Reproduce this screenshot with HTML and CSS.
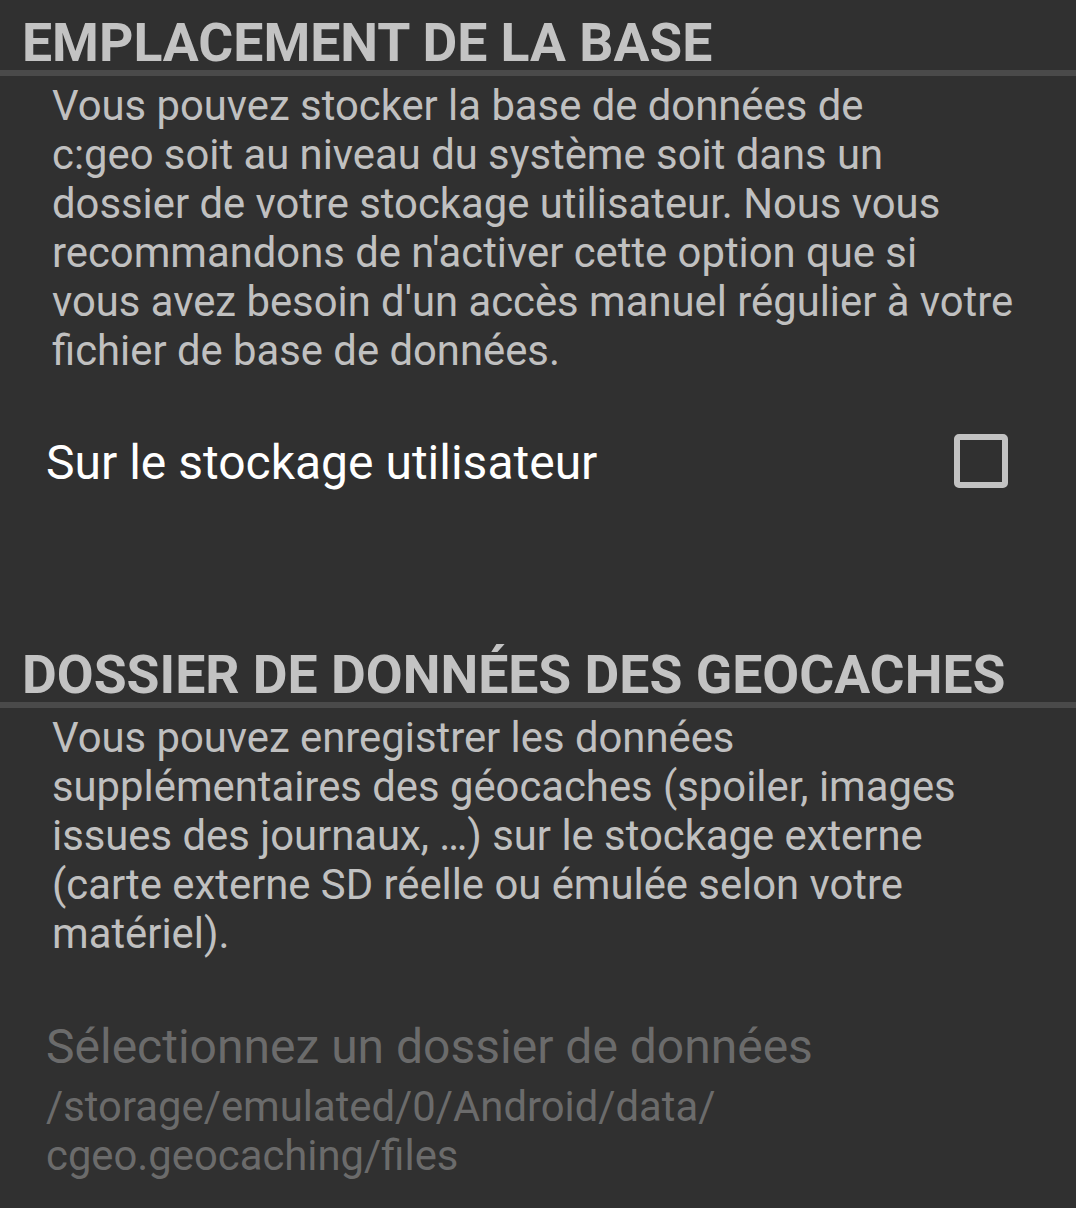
FILE: index.html
```html
<!DOCTYPE html>
<html lang="fr">
<head>
<meta charset="utf-8">
<title>Préférences</title>
<link rel="stylesheet" href="styles.css">
</head>
<body>
<div class="screen">
  <section class="category">
    <h2 class="category-title">EMPLACEMENT DE LA BASE</h2>
    <div class="divider"></div>
    <p class="summary">Vous pouvez stocker la base de données de<br>c:geo soit au niveau du système soit dans un<br>dossier de votre stockage utilisateur. Nous vous<br>recommandons de n'activer cette option que si<br>vous avez besoin d'un accès manuel régulier à votre<br>fichier de base de données.</p>
    <div class="pref-row">
      <span class="pref-title row-title">Sur le stockage utilisateur</span>
      <span class="checkbox"></span>
    </div>
  </section>
  <section class="category second">
    <h2 class="category-title">DOSSIER DE DONNÉES DES GEOCACHES</h2>
    <div class="divider"></div>
    <p class="summary">Vous pouvez enregistrer les données<br>supplémentaires des géocaches (spoiler, images<br>issues des journaux, …) sur le stockage externe<br>(carte externe SD réelle ou émulée selon votre<br>matériel).</p>
    <div class="pref-disabled">
      <div class="pref-title dim">Sélectionnez un dossier de données</div>
      <div class="pref-summary">/storage/emulated/0/Android/data/<br>cgeo.geocaching/files</div>
    </div>
  </section>
</div>
</body>
</html>
```
FILE: styles.css
```css
html, body {
  margin: 0;
  padding: 0;
  background: #303030;
}
body {
  font-family: Roboto, "Noto Sans", sans-serif;
  width: 1076px;
  height: 1208px;
  overflow: hidden;
}
.screen {
  display: flex;
  flex-direction: column;
}
.category-title {
  margin: 0;
  padding: 16px 0 0 22px;
  font-size: 53.5px;
  line-height: 54px;
  font-weight: 700;
  color: #c3c3c3;
  white-space: nowrap;
}
.divider {
  height: 6px;
  background: #4a4a4a;
}
.summary {
  margin: 5px 0 0 0;
  padding: 0 0 0 52px;
  font-size: 41.8px;
  line-height: 49px;
  color: #c0c0c0;
  white-space: nowrap;
}
.pref-row {
  display: flex;
  align-items: center;
  justify-content: space-between;
  padding: 0 68px 0 46px;
  margin-top: 56px;
  height: 60px;
}
.pref-title {
  font-size: 48px;
  line-height: 60px;
  color: #ffffff;
}
.row-title {
  padding-top: 4px;
}
.checkbox {
  box-sizing: border-box;
  width: 54px;
  height: 54px;
  border: 6px solid #c2c2c2;
  border-radius: 5px;
}
.second {
  margin-top: 141px;
}
.pref-disabled {
  padding-left: 46px;
  margin-top: 59px;
}
.pref-title.dim {
  color: #6b6b6b;
}
.pref-summary {
  margin-top: 5px;
  font-size: 41.8px;
  line-height: 49px;
  color: #6b6b6b;
}
```
